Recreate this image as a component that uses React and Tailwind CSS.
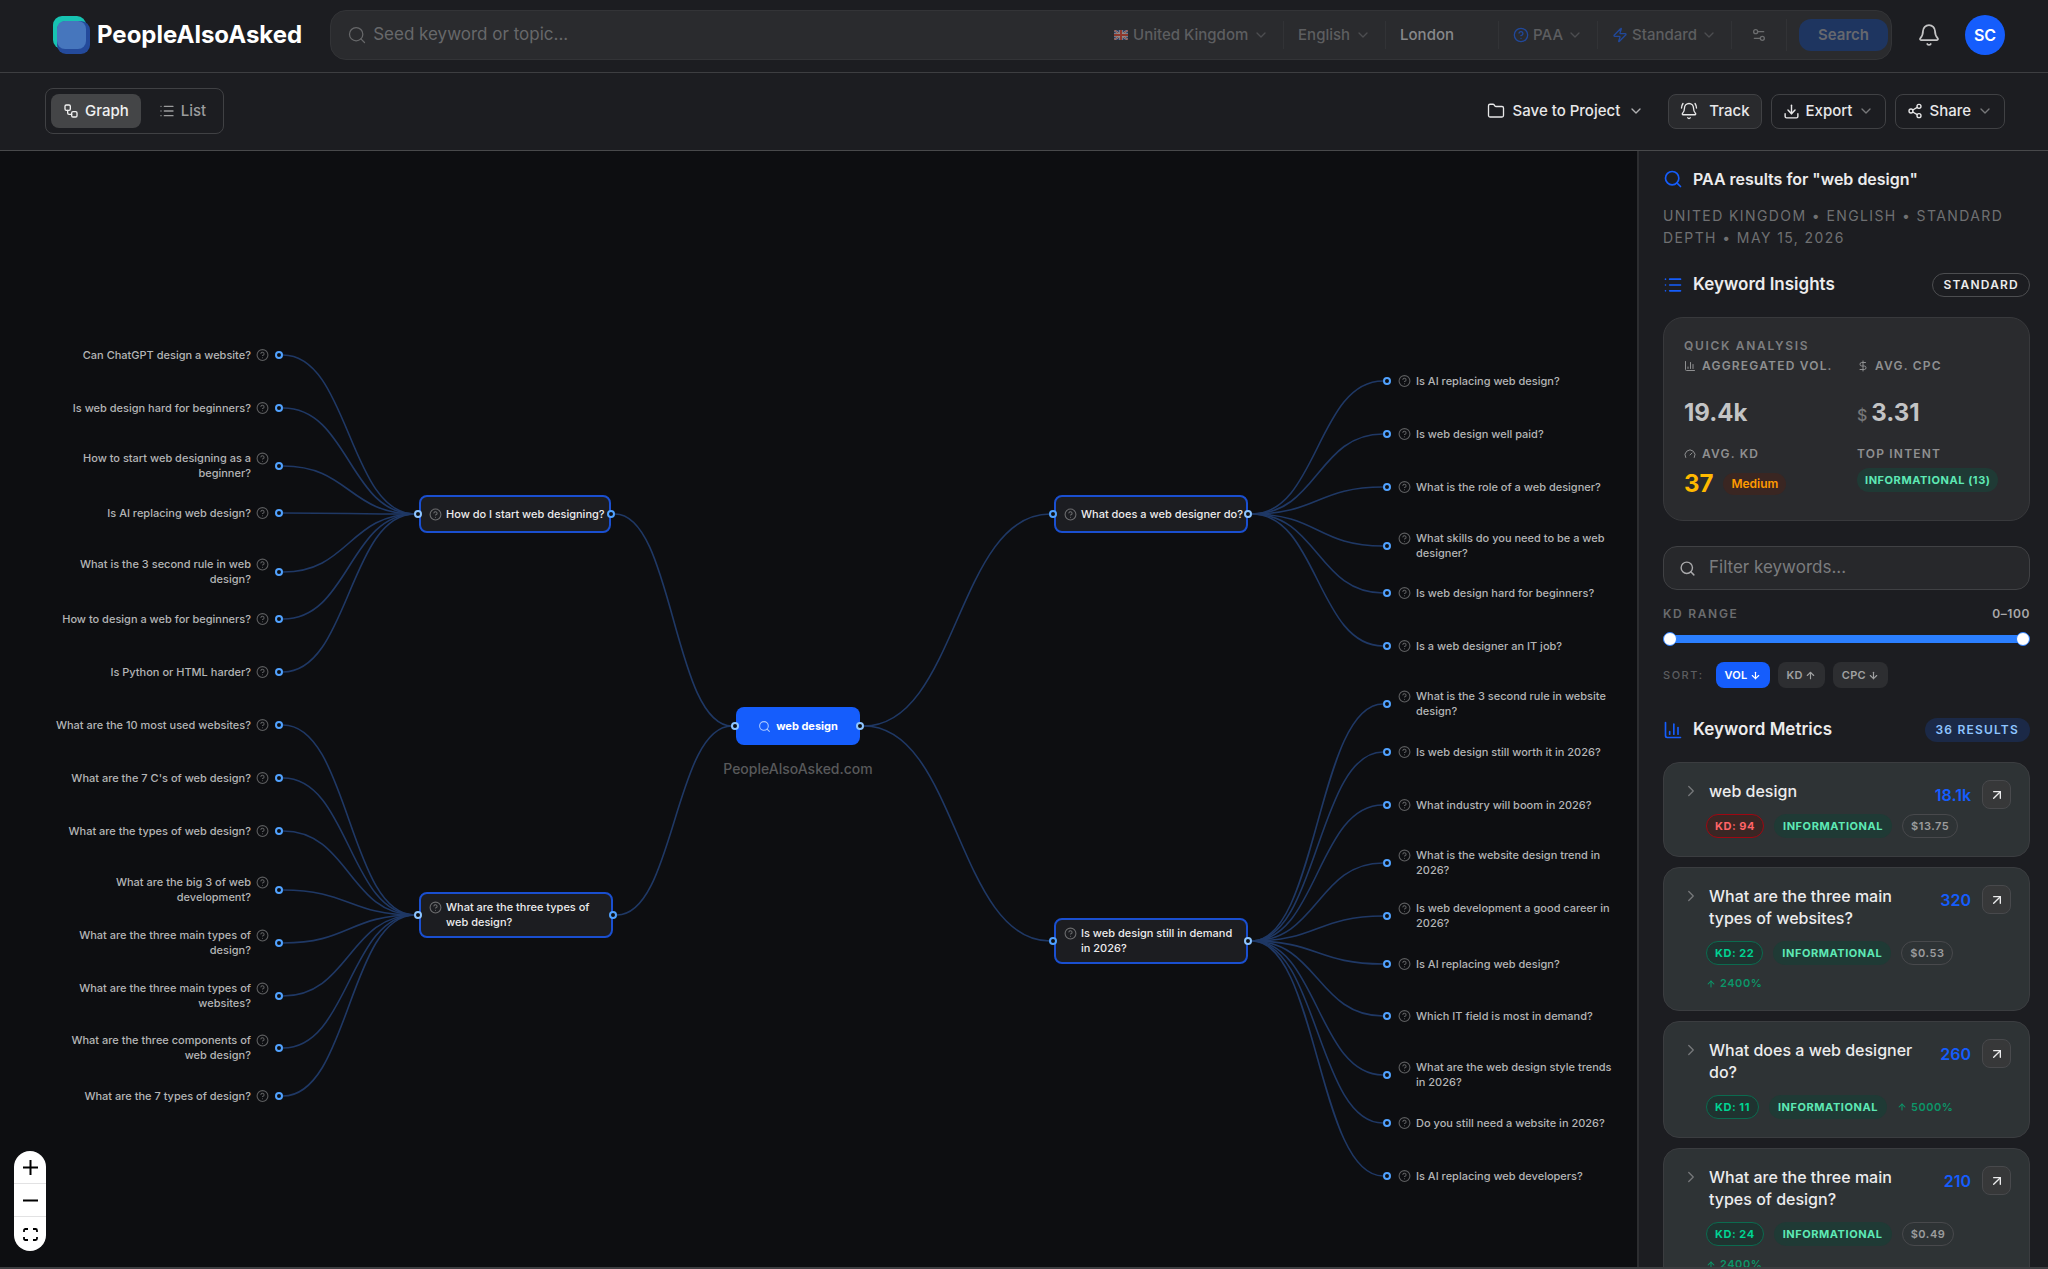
"use client";
import { useState } from "react";
import clsx from "clsx";
import {
  ArrowDown,
  ArrowUp,
  ArrowUpRight,
  Bell,
  BellRing,
  ChartColumn,
  ChevronDown,
  ChevronRight,
  CircleQuestionMark,
  DollarSign,
  Download,
  Folder,
  Gauge,
  List,
  Search,
  Settings2,
  Share2,
  Workflow,
  Zap,
} from "lucide-react";

// graph data, y is the vertical centre of every node inside the canvas
const ROOT = { left: 736, right: 860, y: 575 };

const BRANCHES = [
  {
    side: "left",
    label: "How do I start web designing?",
    left: 419,
    right: 611,
    y: 363,
    children: [
      { y: 204, label: "Can ChatGPT design a website?" },
      { y: 257, label: "Is web design hard for beginners?" },
      { y: 315, label: "How to start web designing as a beginner?" },
      { y: 362, label: "Is AI replacing web design?" },
      { y: 421, label: "What is the 3 second rule in web design?" },
      { y: 468, label: "How to design a web for beginners?" },
      { y: 521, label: "Is Python or HTML harder?" },
    ],
  },
  {
    side: "left",
    label: "What are the three types of web design?",
    left: 419,
    right: 613,
    y: 764,
    children: [
      { y: 574, label: "What are the 10 most used websites?" },
      { y: 627, label: "What are the 7 C's of web design?" },
      { y: 680, label: "What are the types of web design?" },
      { y: 739, label: "What are the big 3 of web development?" },
      { y: 792, label: "What are the three main types of design?" },
      { y: 845, label: "What are the three main types of websites?" },
      { y: 897, label: "What are the three components of web design?" },
      { y: 945, label: "What are the 7 types of design?" },
    ],
  },
  {
    side: "right",
    label: "What does a web designer do?",
    left: 1054,
    right: 1248,
    y: 363,
    children: [
      { y: 230, label: "Is AI replacing web design?" },
      { y: 283, label: "Is web design well paid?" },
      { y: 336, label: "What is the role of a web designer?" },
      { y: 395, label: "What skills do you need to be a web designer?" },
      { y: 442, label: "Is web design hard for beginners?" },
      { y: 495, label: "Is a web designer an IT job?" },
    ],
  },
  {
    side: "right",
    label: "Is web design still in demand in 2026?",
    left: 1054,
    right: 1248,
    y: 790,
    children: [
      { y: 553, label: "What is the 3 second rule in website design?" },
      { y: 601, label: "Is web design still worth it in 2026?" },
      { y: 654, label: "What industry will boom in 2026?" },
      { y: 712, label: "What is the website design trend in 2026?" },
      { y: 765, label: "Is web development a good career in 2026?" },
      { y: 813, label: "Is AI replacing web design?" },
      { y: 865, label: "Which IT field is most in demand?" },
      { y: 924, label: "What are the web design style trends in 2026?" },
      { y: 972, label: "Do you still need a website in 2026?" },
      { y: 1025, label: "Is AI replacing web developers?" },
    ],
  },
];

const LEFT_LEAF_X = 279;
const RIGHT_LEAF_X = 1387;

const METRICS = [
  { keyword: "web design", volume: "18.1k", kd: 94, cpc: "$13.75" },
  { keyword: "What are the three main types of websites?", volume: "320", kd: 22, cpc: "$0.53", trend: "2400%" },
  { keyword: "What does a web designer do?", volume: "260", kd: 11, trend: "5000%" },
  { keyword: "What are the three main types of design?", volume: "210", kd: 24, cpc: "$0.49", trend: "2400%" },
];

function Logo() {
  return (
    <a href="#" className="flex items-center gap-[6px] text-2xl font-bold text-white">
      <svg width="38" height="38" viewBox="0 0 38 38" aria-hidden="true">
        <rect x="0" y="0" width="33" height="33" rx="9" fill="#17c3b2" />
        <rect x="4" y="5" width="33" height="33" rx="9" fill="#244a9b" />
        <rect x="4" y="5" width="29" height="28" rx="8" fill="#4676bd" />
      </svg>
      PeopleAlsoAsked
    </a>
  );
}

function UkFlag() {
  return (
    <svg width="14" height="10" viewBox="0 0 14 10" className="opacity-60" aria-hidden="true">
      <rect width="14" height="10" rx="1" fill="#2f4f8f" />
      <path d="M0 0l14 10M14 0L0 10" stroke="#d5d5d5" strokeWidth="2" />
      <path d="M0 0l14 10M14 0L0 10" stroke="#d0402b" strokeWidth="0.8" />
      <path d="M7 0v10M0 5h14" stroke="#d5d5d5" strokeWidth="3.4" />
      <path d="M7 0v10M0 5h14" stroke="#d0402b" strokeWidth="2" />
    </svg>
  );
}

function HeaderSelect({ label, value, icon }) {
  return (
    <label className="flex h-7 items-center border-r border-[#323336] px-[14px]">
      {icon && <span className="mr-1 flex w-4 justify-center">{icon}</span>}
      <select aria-label={label} className="appearance-none bg-transparent font-medium text-[#5d5e60] outline-none">
        <option>{value}</option>
      </select>
      <ChevronDown size={16} className="ml-1 text-[#4c4d50]" />
    </label>
  );
}

function Header() {
  return (
    <header className="flex items-center border-b border-[#3d3e41] pt-[10px] pr-[43px] pb-3 pl-[53px]">
      <Logo />
      <form className="ml-7 flex h-[50px] flex-1 items-center rounded-2xl border border-[#333437] bg-[#2a2b2e] pr-[3px] pl-4 text-[15px]">
        <Search size={20} strokeWidth={1.5} className="text-[#67686a]" />
        <input
          aria-label="Seed keyword"
          placeholder="Seed keyword or topic..."
          className="ml-[6px] min-w-0 flex-1 bg-transparent text-[17px] outline-none placeholder:text-[#67686a]"
        />
        <HeaderSelect label="Country" value="United Kingdom" icon={<UkFlag />} />
        <HeaderSelect label="Language" value="English" />
        <div className="flex h-7 w-[113px] items-center border-r border-[#323336] px-[14px]">
          <input aria-label="Location" defaultValue="London" className="w-full bg-transparent font-medium text-[#87888a] outline-none" />
        </div>
        <HeaderSelect label="Source" value="PAA" icon={<CircleQuestionMark size={16} className="text-[#21489a]" />} />
        <HeaderSelect label="Depth" value="Standard" icon={<Zap size={16} className="text-[#21489a]" />} />
        <button type="button" aria-label="Filters" className="flex h-8 w-[55px] items-center justify-center border-r border-[#323336] text-[#6b6c6e]">
          <Settings2 size={16} />
        </button>
        <button type="button" className="ml-3 h-8 rounded-xl bg-[#1e3560] px-[19px] font-semibold text-[#66686e]">
          Search
        </button>
      </form>
      <button type="button" aria-label="Notifications" className="ml-[25px] text-[#c4c4c5]">
        <Bell size={24} strokeWidth={1.75} />
      </button>
      <button type="button" className="ml-6 size-10 rounded-full bg-[#155dfc] font-semibold text-white">
        SC
      </button>
    </header>
  );
}

function Toolbar({ view, setView }) {
  return (
    <div className="flex items-center justify-between border-b border-[#48494b] pt-[15px] pr-[43px] pb-4 pl-[45px] text-[15px] font-medium text-[#e8e8e9]">
      <div className="flex rounded-lg border border-[#404144] p-[5px]">
        {[
          { id: "graph", label: "Graph", Icon: Workflow },
          { id: "list", label: "List", Icon: List },
        ].map(({ id, label, Icon }) => (
          <button
            key={id}
            type="button"
            onClick={() => setView(id)}
            className={clsx("flex h-[34px] items-center gap-[6px] rounded-lg px-3", view === id ? "bg-[#444547] text-[#f1f1f1]" : "ml-[6px] text-[#9b9c9d]")}
          >
            <Icon size={16} />
            {label}
          </button>
        ))}
      </div>
      <div className="flex items-center gap-[9px]">
        <button type="button" className="mr-[15px] flex items-center gap-2">
          <Folder size={18} strokeWidth={1.75} />
          Save to Project
          <ChevronDown size={16} className="text-[#b0b0b2]" />
        </button>
        <button type="button" className="flex h-[35px] items-center gap-[11px] rounded-lg border border-[#404144] bg-[#292a2d] px-[11px]">
          <BellRing size={18} strokeWidth={1.75} />
          Track
        </button>
        <button type="button" className="flex h-[35px] items-center gap-[6px] rounded-lg border border-[#404144] px-[11px]">
          <Download size={17} />
          Export
          <ChevronDown size={16} className="text-[#77787a]" />
        </button>
        <button type="button" className="flex h-[35px] items-center gap-[6px] rounded-lg border border-[#404144] px-[11px]">
          <Share2 size={16} />
          Share
          <ChevronDown size={16} className="text-[#77787a]" />
        </button>
      </div>
    </div>
  );
}

function edgePath(x1, y1, x2, y2) {
  const mid = (x1 + x2) / 2;
  return `M${x1} ${y1}C${mid} ${y1} ${mid} ${y2} ${x2} ${y2}`;
}

function Edges() {
  return (
    <svg className="absolute inset-0 size-full" fill="none" aria-hidden="true">
      <g stroke="#1f3865" strokeWidth="1.6">
        {BRANCHES.map((branch) => {
          const isLeft = branch.side === "left";
          return (
            <g key={branch.label}>
              <path
                d={
                  isLeft
                    ? edgePath(branch.right + 4, branch.y, ROOT.left - 4, ROOT.y)
                    : edgePath(ROOT.right + 4, ROOT.y, branch.left - 4, branch.y)
                }
              />
              {branch.children.map((leaf) => (
                <path
                  key={leaf.y}
                  d={
                    isLeft
                      ? edgePath(LEFT_LEAF_X + 4, leaf.y, branch.left - 4, branch.y)
                      : edgePath(branch.right + 4, branch.y, RIGHT_LEAF_X - 4, leaf.y)
                  }
                />
              ))}
            </g>
          );
        })}
      </g>
    </svg>
  );
}

function Handle({ x, y, bright }) {
  return (
    <span
      className={clsx(
        "absolute size-2 -translate-x-1/2 -translate-y-1/2 rounded-full border-2 bg-[#0d0e11]",
        bright ? "border-[#8ec5ff]" : "border-[#51a2ff]"
      )}
      style={{ left: x, top: y }}
    />
  );
}

function Leaf({ leaf, side }) {
  const isLeft = side === "left";
  return (
    <>
      <div
        className={clsx(
          "absolute flex -translate-y-1/2 items-start gap-[5px] text-[11px] leading-[15px] font-medium text-[#b4b5b6]",
          isLeft ? "w-[218px] flex-row-reverse text-right" : "w-[222px]"
        )}
        style={{ left: isLeft ? 51 : 1398, top: leaf.y }}
      >
        <CircleQuestionMark size={13} className="mt-px shrink-0 text-[#5d5e60]" />
        <span>{leaf.label}</span>
      </div>
      <Handle x={isLeft ? LEFT_LEAF_X : RIGHT_LEAF_X} y={leaf.y} />
    </>
  );
}

function Graph() {
  return (
    <main className="relative min-w-0 flex-1 overflow-hidden bg-[#0d0e11]">
      <Edges />
      {BRANCHES.map((branch) => (
        <div key={branch.label}>
          <button
            type="button"
            className="absolute flex min-h-[38px] -translate-y-1/2 items-center rounded-lg border-2 border-[#1a4fd0] bg-[#1c1d21] py-[6px] pr-[3px] pl-2 text-left text-[11px] leading-[15px] font-medium text-[#ececed]"
            style={{ left: branch.left, top: branch.y, width: branch.right - branch.left }}
          >
            <span className="flex items-start gap-1">
              <CircleQuestionMark size={13} className="mt-px shrink-0 text-[#6b6c6e]" />
              <span>{branch.label}</span>
            </span>
          </button>
          <Handle x={branch.left - 1} y={branch.y} bright={branch.side === "left"} />
          <Handle x={branch.right} y={branch.y} bright={branch.side === "right"} />
          {branch.children.map((leaf) => (
            <Leaf key={leaf.y} leaf={leaf} side={branch.side} />
          ))}
        </div>
      ))}
      <button
        type="button"
        className="absolute flex h-[38px] -translate-y-1/2 items-center justify-center gap-[5px] rounded-lg bg-[#155dfc] text-[11px] font-bold text-white"
        style={{ left: ROOT.left, top: ROOT.y, width: ROOT.right - ROOT.left }}
      >
        <Search size={13} className="text-[#a9c8ff]" />
        web design
      </button>
      <Handle x={ROOT.left - 1} y={ROOT.y} bright />
      <Handle x={ROOT.right} y={ROOT.y} bright />
      <p className="absolute top-[608px] left-[798px] -translate-x-1/2 text-sm leading-5 font-medium text-[#58595b]">PeopleAlsoAsked.com</p>

      <div className="absolute bottom-4 left-[14px] flex w-8 flex-col divide-y divide-[#e2e2e3] overflow-hidden rounded-full bg-white text-black">
        <button type="button" aria-label="Zoom in" className="flex h-[33px] items-center justify-center">
          <svg width="15" height="15" viewBox="0 0 15 15" stroke="currentColor" strokeWidth="2">
            <path d="M7.5 0v15M0 7.5h15" />
          </svg>
        </button>
        <button type="button" aria-label="Zoom out" className="flex h-[33px] items-center justify-center">
          <svg width="15" height="15" viewBox="0 0 15 15" stroke="currentColor" strokeWidth="2">
            <path d="M0 7.5h15" />
          </svg>
        </button>
        <button type="button" aria-label="Fit view" className="flex h-[34px] items-center justify-center">
          <svg width="15" height="13" viewBox="0 0 15 13" fill="none" stroke="currentColor" strokeWidth="1.8">
            <path d="M1 4V2.5Q1 1 2.500 1H5M10 1h2.500Q14 1 14 2.500V4M14 9v1.500Q14 12 12.500 12H10M5 12H2.500Q1 12 1 10.500V9" />
          </svg>
        </button>
      </div>
    </main>
  );
}

function StatLabel({ icon, children }) {
  return (
    <p className="flex items-center gap-[6px] text-xs leading-4 font-semibold tracking-[0.1em] text-[#8f9091] uppercase">
      {icon}
      {children}
    </p>
  );
}

function Insights() {
  return (
    <section className="mt-4 rounded-[20px] border border-[#38393c] bg-[#2a2b2e] p-5">
      <p className="text-xs leading-4 font-semibold tracking-[0.14em] text-[#7d7e80]">QUICK ANALYSIS</p>
      <div className="mt-1 grid grid-cols-[173px_1fr]">
        <div>
          <StatLabel icon={<ChartColumn size={12} />}>Aggregated Vol.</StatLabel>
          <p className="mt-[23px] text-2xl leading-8 font-bold text-[#c3c4c5]">19.4k</p>
        </div>
        <div>
          <StatLabel icon={<DollarSign size={12} />}>Avg. CPC</StatLabel>
          <p className="mt-[23px] text-2xl leading-8 font-bold text-[#c3c4c5]">
            <span className="mr-1 text-base font-medium text-[#77787a]">$</span>3.31
          </p>
        </div>
        <div className="mt-[17px]">
          <StatLabel icon={<Gauge size={12} />}>Avg. KD</StatLabel>
          <div className="mt-[6px] flex items-center gap-[10px]">
            <span className="text-2xl leading-8 font-bold text-[#ffb900]">37</span>
            <span className="rounded-full bg-[#3a2622] px-2 text-xs leading-[22px] font-semibold text-[#fe9a00]">Medium</span>
          </div>
        </div>
        <div className="mt-[17px]">
          <StatLabel>Top Intent</StatLabel>
          <span className="mt-[6px] inline-block rounded-full bg-[#1f3a35] px-2 text-[11px] leading-6 font-bold tracking-wider text-[#5ee9b5]">
            INFORMATIONAL (13)
          </span>
        </div>
      </div>
    </section>
  );
}

const THUMB =
  "pointer-events-none absolute inset-0 w-full appearance-none bg-transparent [&::-webkit-slider-thumb]:pointer-events-auto [&::-webkit-slider-thumb]:size-[14px] [&::-webkit-slider-thumb]:appearance-none [&::-webkit-slider-thumb]:rounded-full [&::-webkit-slider-thumb]:border [&::-webkit-slider-thumb]:border-[#2b7fff] [&::-webkit-slider-thumb]:bg-white";

function Filters() {
  const [range, setRange] = useState([0, 100]);
  const [sort, setSort] = useState("VOL");

  return (
    <section>
      <div className="mt-[25px] flex h-11 items-center gap-[13px] rounded-[14px] border border-[#404144] bg-[#27282b] px-[15px]">
        <Search size={17} className="text-[#a9a9ab]" />
        <input
          aria-label="Filter keywords"
          placeholder="Filter keywords..."
          className="min-w-0 flex-1 bg-transparent text-[17px] outline-none placeholder:text-[#7b7c7e]"
        />
      </div>
      <div className="mt-4 flex items-center justify-between text-xs leading-4 font-semibold">
        <span className="tracking-[0.14em] text-[#6b6c6e]">KD RANGE</span>
        <span className="tracking-wider text-[#a9a9ab]">
          {range[0]}–{range[1]}
        </span>
      </div>
      <div className="relative mt-[10px] h-[14px]">
        <div className="mx-[7px] h-full py-[3px]">
          <div className="h-full bg-[#2b7fff]" />
        </div>
        <input
          type="range"
          aria-label="Minimum KD"
          min="0"
          max="100"
          value={range[0]}
          onChange={(e) => setRange([Math.min(+e.target.value, range[1]), range[1]])}
          className={THUMB}
        />
        <input
          type="range"
          aria-label="Maximum KD"
          min="0"
          max="100"
          value={range[1]}
          onChange={(e) => setRange([range[0], Math.max(+e.target.value, range[0])])}
          className={THUMB}
        />
      </div>
      <div className="mt-4 flex items-center gap-2 text-[11px] font-semibold">
        <span className="mr-1 font-medium tracking-[0.14em] text-[#5d5e60]">SORT:</span>
        {[
          { id: "VOL", Icon: ArrowDown },
          { id: "KD", Icon: ArrowUp },
          { id: "CPC", Icon: ArrowDown },
        ].map(({ id, Icon }) => (
          <button
            key={id}
            type="button"
            onClick={() => setSort(id)}
            className={clsx(
              "flex h-[26px] items-center gap-[2px] rounded-lg px-[9px] tracking-wide",
              sort === id ? "bg-[#155dfc] text-white" : "bg-[#2d2e31] text-[#a0a1a2]"
            )}
          >
            {id}
            <Icon size={11} strokeWidth={2.5} />
          </button>
        ))}
      </div>
    </section>
  );
}

function MetricCard({ item }) {
  const isHard = item.kd > 70;
  return (
    <article className="rounded-2xl border border-[#3b3d40] bg-[#2e3335] px-[18px] pt-[17px] pb-[18px]">
      <div className="flex items-start">
        <button type="button" aria-label="Expand" className="mt-[2px] mr-[9px] text-[#77797b]">
          <ChevronRight size={18} strokeWidth={1.75} />
        </button>
        <h3 className="flex-1 pr-5 text-base leading-[22px] font-medium text-[#ececed]">{item.keyword}</h3>
        <div className="-mb-2 flex items-center gap-[11px]">
          <span className="text-base font-semibold text-[#155dfc]">{item.volume}</span>
          <a
            href="#"
            aria-label="Open keyword"
            className="flex size-[29px] items-center justify-center rounded-lg border border-[#48494c] bg-[#373839] text-[#ececed]"
          >
            <ArrowUpRight size={16} />
          </a>
        </div>
      </div>
      <div className="mt-3 ml-6 flex flex-wrap items-center gap-[10px] text-[11px] font-bold tracking-wider">
        <span
          className={clsx(
            "rounded-full border px-2 leading-[22px]",
            isHard ? "border-[#9f0712] bg-[#3a2624] text-[#ff6467]" : "border-[#0b6b4f] bg-[#1f3330] text-[#00d492]"
          )}
        >
          KD: {item.kd}
        </span>
        <span className="rounded-full bg-[#1f3a35] px-[9px] leading-6 text-[#5ee9b5]">INFORMATIONAL</span>
        {item.cpc && <span className="rounded-full border border-[#48494c] px-2 leading-[22px] font-semibold text-[#9b9c9d]">{item.cpc}</span>}
        {item.trend && (
          <span className="flex items-center gap-1 leading-[17px] font-semibold text-[#0b9668]">
            <ArrowUp size={10} strokeWidth={2.5} />
            {item.trend}
          </span>
        )}
      </div>
    </article>
  );
}

function Sidebar() {
  return (
    <aside className="w-[411px] shrink-0 overflow-hidden border-l-2 border-[#2c2d30] bg-[#1c1d21] pt-3 pr-[18px] pl-6">
      <h1 className="flex items-center gap-[10px] text-base leading-8 font-semibold text-[#ececed]">
        <Search size={20} className="text-[#155dfc]" />
        PAA results for "web design"
      </h1>
      <p className="mt-[10px] text-sm leading-[22px] tracking-widest text-[#6f7072] uppercase">
        United Kingdom • English • Standard Depth • May 15, 2026
      </p>
      <div className="mt-5 flex h-8 items-center justify-between">
        <h2 className="flex items-center gap-[10px] text-[17px] font-semibold text-[#ececed]">
          <List size={20} className="text-[#155dfc]" />
          Keyword Insights
        </h2>
        <span className="rounded-full border border-[#4c4d50] px-[10px] text-xs leading-[22px] font-semibold tracking-[0.1em] text-[#ececed]">STANDARD</span>
      </div>
      <Insights />
      <Filters />
      <div className="mt-[26px] flex h-8 items-center justify-between">
        <h2 className="flex items-center gap-[10px] text-[17px] font-semibold text-[#ececed]">
          <ChartColumn size={20} className="text-[#155dfc]" />
          Keyword Metrics
        </h2>
        <span className="rounded-full bg-[#1b2947] px-[11px] text-xs leading-6 font-semibold tracking-[0.1em] text-[#8ec5ff]">36 RESULTS</span>
      </div>
      <div className="mt-4 flex flex-col gap-[10px]">
        {METRICS.map((item) => (
          <MetricCard key={item.keyword} item={item} />
        ))}
      </div>
    </aside>
  );
}

export default function App() {
  const [view, setView] = useState("graph");

  return (
    <div className="flex h-screen flex-col overflow-hidden border-b-2 border-[#3d3e41] bg-[#1c1d21] font-['Inter',sans-serif] antialiased">
      <Header />
      <Toolbar view={view} setView={setView} />
      <div className="flex min-h-0 flex-1">
        <Graph />
        <Sidebar />
      </div>
    </div>
  );
}
